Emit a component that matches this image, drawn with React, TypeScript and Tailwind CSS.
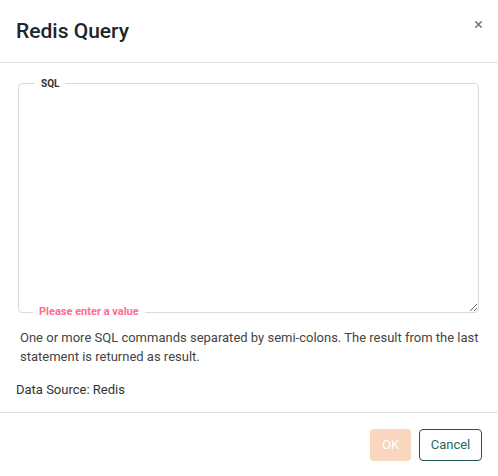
import { X } from 'lucide-react'

export default function App() {
  return (
    <div className="flex h-[476px] w-[498px] flex-col bg-white font-['Roboto',sans-serif] text-[#212529]">
      <header className="flex h-[63px] items-start justify-between border-b border-[#dee2e6] pl-4 pr-[14px]">
        <h1 className="pt-[19px] text-[21px] font-medium leading-6">Redis Query</h1>
        <button className="mt-[19px] text-[#777]" aria-label="Close">
          <X className="size-[11px]" strokeWidth={3.5} />
        </button>
      </header>

      <div className="flex flex-1 flex-col px-4 pt-5">
        <div className="relative ml-[2px] mr-[3px] h-[230px] rounded-[4px] border border-[#dcdcdc]">
          <span className="absolute -top-[8px] left-[16px] bg-white px-[6px] text-[10px] font-bold leading-4 text-[#333]">
            SQL
          </span>
          <textarea className="block h-full w-full resize-y rounded-[4px] bg-transparent px-3 pt-3 text-[13px] outline-none" />
          <span className="absolute -bottom-[8px] left-[14px] bg-white px-[6px] text-[11px] font-bold leading-4 text-[#ff6b8f]">
            Please enter a value
          </span>
        </div>
        <p className="mt-[15px] pl-1 text-[13px] leading-[19px] text-[#444]">
          One or more SQL commands separated by semi-colons. The result from the last statement is returned as
          result.
        </p>
        <p className="mt-[14px] text-[13px] leading-[19px] text-[#333]">Data Source: Redis</p>
      </div>

      <footer className="flex h-[64px] items-center justify-end gap-2 border-t border-[#dee2e6] pr-4">
        <button className="h-8 w-[41px] rounded-[4px] bg-[#f9d6bd] text-[13px] text-white">OK</button>
        <button className="h-8 w-[63px] rounded-[4px] border border-[#1e5a52] text-[13px] text-[#2a665e]">
          Cancel
        </button>
      </footer>
    </div>
  )
}
